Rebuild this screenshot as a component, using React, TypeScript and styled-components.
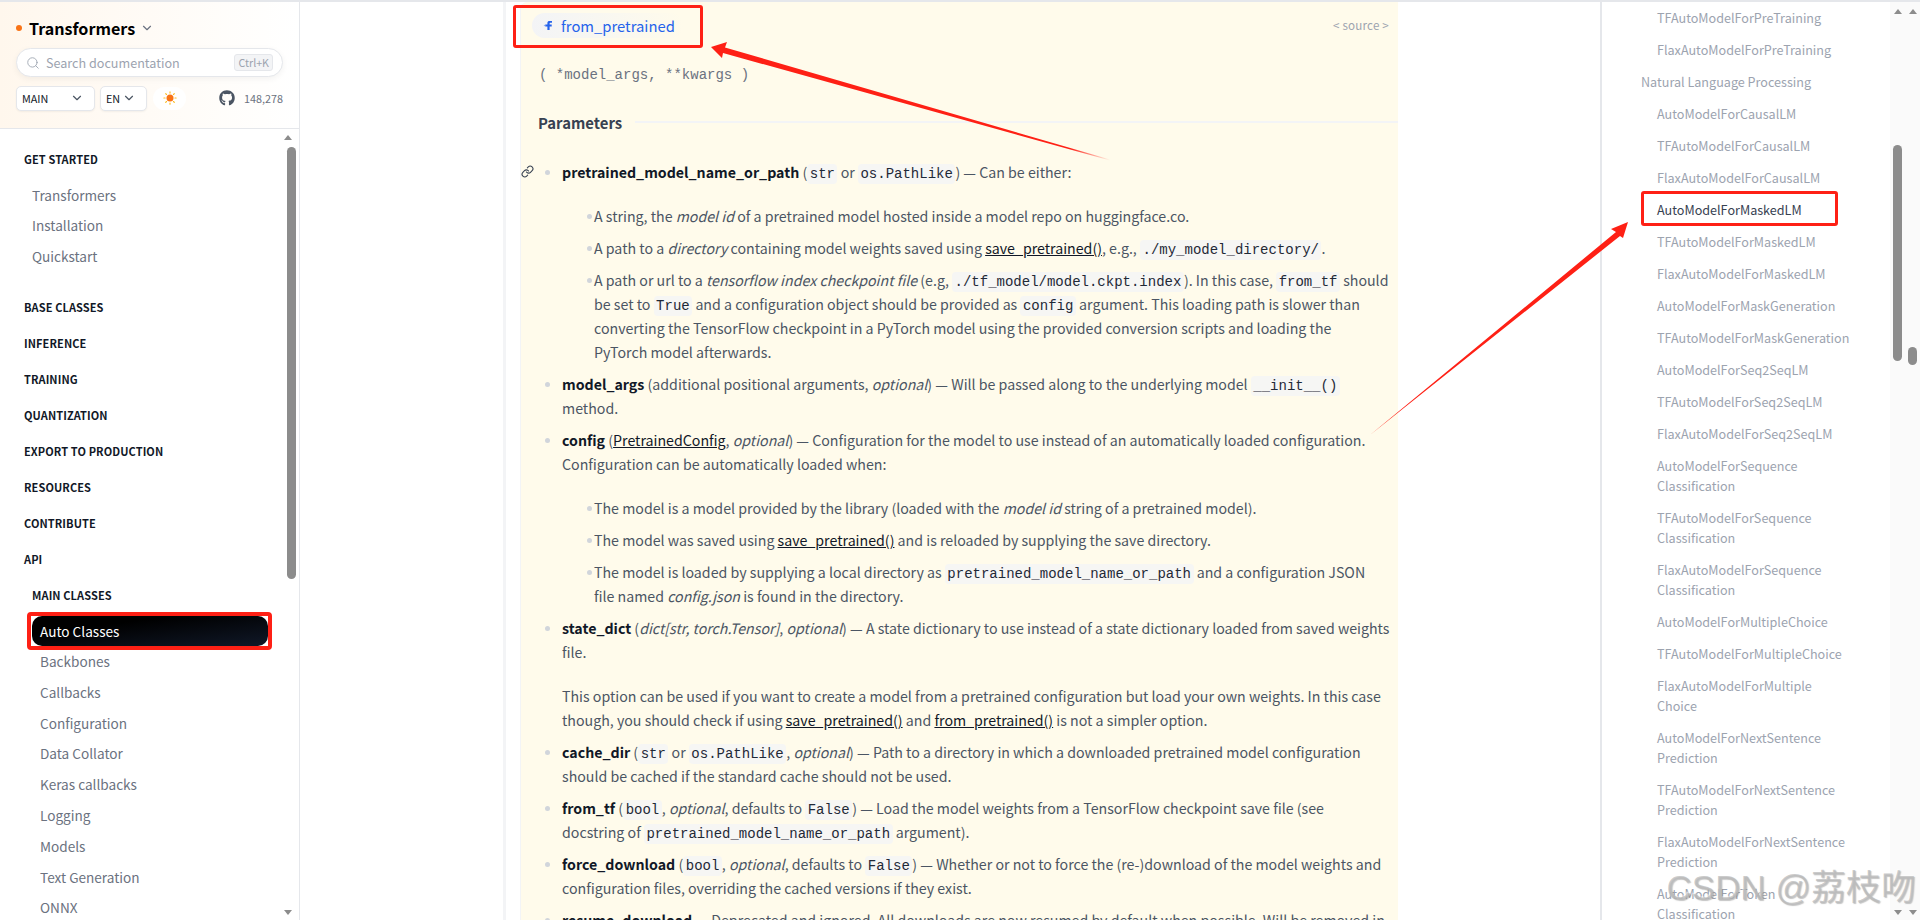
import React from 'react';
import styled, { createGlobalStyle } from 'styled-components';
import { ChevronDown, Search, Link } from 'lucide-react';
import { FaGithub } from 'react-icons/fa';

const sans = `"Noto Sans CJK SC", "Source Sans Pro", "Noto Sans", sans-serif`;
const mono = `"Liberation Mono", "DejaVu Sans Mono", monospace`;
const RED = '#fe2015';

const Global = createGlobalStyle`
  html, body { margin: 0; padding: 0; height: 920px; overflow: hidden; background: #fff; }
  body { font-family: ${sans}; }
  *, *::before, *::after { box-sizing: border-box; }
`;

const Page = styled.div`
  position: relative;
  display: grid;
  grid-template-columns: 300px 1300px 320px;
  width: 1920px;
  height: 920px;
  overflow: hidden;
  border-top: 2px solid #e5e7eb;
`;

/* left sidebar */
const LeftBar = styled.aside`
  display: flex;
  flex-direction: column;
  height: 918px;
  border-right: 1px solid #e5e7eb;
  overflow: hidden;
`;
const SideHead = styled.header`
  height: 127px;
  flex: none;
  padding: 11px 16px 0;
  background: linear-gradient(to right, #fff7ed, #fff);
  border-bottom: 1px solid #e5e7eb;
`;
const Brand = styled.div`
  display: flex;
  align-items: center;
  height: 30px;
  font-size: 16.1px;
  font-weight: 700;
  color: #000;
  svg { margin-left: 5px; color: #6b7280; }
`;
const Dot = styled.span`
  width: 6px;
  height: 6px;
  margin: 0 7px 0 0;
  border-radius: 50%;
  background: #f97316;
`;
const SearchBox = styled.div`
  display: flex;
  align-items: center;
  height: 29px;
  margin-top: 5px;
  padding: 0 9px;
  width: 267px;
  background: #fff;
  border: 1px solid #e5e7eb;
  border-radius: 15px;
  box-shadow: 0 2px 6px rgba(0, 0, 0, 0.05);
  color: #9ca3af;
  font-size: 12.6px;
  svg { margin-right: 6px; }
`;
const Kbd = styled.kbd`
  margin-left: auto;
  padding: 0 3px;
  height: 17px;
  line-height: 15px;
  font-family: ${sans};
  font-size: 10.7px;
  background: #f3f4f6;
  border: 1px solid #e5e7eb;
  border-radius: 3px;
`;
const Controls = styled.div`
  display: flex;
  align-items: center;
  margin-top: 8px;
  height: 26px;
`;
const Select = styled.div<{ $w: number }>`
  display: flex;
  align-items: center;
  justify-content: space-between;
  width: ${(p) => p.$w}px;
  height: 25px;
  margin-right: 5px;
  padding: 0 10px 0 5px;
  font-size: 10.8px;
  color: #111827;
  background: #fff;
  border: 1px solid #e5e7eb;
  border-radius: 5px;
  box-shadow: 0 1px 2px rgba(0, 0, 0, 0.05);
  svg { color: #4b5563; }
`;
const ThemeBtn = styled.button`
  display: flex;
  align-items: center;
  justify-content: center;
  width: 33px;
  height: 23px;
  margin-left: 1px;
  padding: 0;
  border: 0;
  border-radius: 12px;
  background: #fff;
`;
const Stars = styled.div`
  display: flex;
  align-items: center;
  margin-left: auto;
  font-size: 10.8px;
  color: #6b7280;
  svg { margin-right: 9px; color: #4b5563; }
`;
const NavWrap = styled.div`
  position: relative;
  flex: 1;
  overflow: hidden;
  padding: 20px 0 0 24px;
`;
const NavHeading = styled.div<{ $sub?: boolean; $mt?: number }>`
  height: 20px;
  line-height: 20px;
  margin-top: ${(p) => p.$mt ?? 16}px;
  margin-left: ${(p) => (p.$sub ? 8 : 0)}px;
  font-size: 11px;
  font-weight: 700;
  letter-spacing: 0.1px;
  color: #111827;
  text-transform: uppercase;
`;
const NavItem = styled.div<{ $deep?: boolean; $active?: boolean; $h?: number }>`
  position: relative;
  height: ${(p) => p.$h ?? 30.8}px;
  line-height: ${(p) => p.$h ?? 30.8}px;
  margin-left: 8px;
  width: 236px;
  padding-left: ${(p) => (p.$deep ? 8 : 0)}px;
  font-size: 13.6px;
  color: ${(p) => (p.$active ? '#fff' : '#6b7280')};
  ${(p) =>
    p.$active &&
    `background: linear-gradient(to bottom right, #000 30%, #101828);
     border-radius: 10px;
     &::after {
       content: '';
       position: absolute;
       left: -5px;
       right: -4px;
       top: -4px;
       bottom: -4px;
       border: 4px solid ${RED};
       border-radius: 4px;
     }`}
`;
const NavGroup = styled.div<{ $mt?: number }>`
  margin-top: ${(p) => p.$mt ?? 0}px;
`;

/* page scrollbars, drawn */
const Scrollbar = styled.div<{ $right: number; $top: number; $h: number }>`
  position: absolute;
  right: ${(p) => p.$right}px;
  top: ${(p) => p.$top}px;
  width: 9px;
  height: ${(p) => p.$h}px;
  background: #8c8c8c;
  border-radius: 5px;
`;
const ScrollArrow = styled.div<{ $right: number; $down?: boolean; $y: number }>`
  position: absolute;
  right: ${(p) => p.$right}px;
  ${(p) => (p.$down ? 'bottom' : 'top')}: ${(p) => p.$y}px;
  width: 0;
  height: 0;
  border-left: 4.5px solid transparent;
  border-right: 4.5px solid transparent;
  ${(p) => (p.$down ? 'border-top' : 'border-bottom')}: 5px solid #8c8c8c;
`;

/* main */
const Main = styled.main`
  height: 918px;
  padding-left: 203px;
  overflow: hidden;
`;
const MainInner = styled.div`
  height: 100%;
  padding-left: 14px;
  border-left: 3px solid #f3f4f6;
`;
const Panel = styled.section`
  width: 878px;
  height: 100%;
  background: #fffbeb;
  border-left: 1px solid #f3f4f6;
  border-top-left-radius: 8px;
`;
const TitleRow = styled.div`
  display: flex;
  align-items: center;
  justify-content: space-between;
  height: 46px;
  padding: 0 9px 0 11px;
`;
const Chip = styled.div`
  position: relative;
  display: flex;
  align-items: center;
  flex: none;
  width: 152px;
  height: 25px;
  padding-left: 11px;
  border-radius: 13px;
  background: linear-gradient(to right, #f3f4f6, #fffbeb);
  color: #2563eb;
  font-size: 14.8px;
  svg { flex: none; margin-right: 7px; }
  &::after {
    content: '';
    position: absolute;
    left: -19px;
    right: -19px;
    top: -8px;
    bottom: -10px;
    border: 3px solid ${RED};
    border-radius: 3px;
  }
`;
const Source = styled.div`
  font-size: 11.6px;
  color: #9ca3af;
  letter-spacing: 0.2px;
`;
const Signature = styled.div`
  padding-left: 18px;
  height: 34px;
  margin-top: 10px;
  line-height: 34px;
  font-family: ${mono};
  font-size: 14px;
  color: #6b7280;
`;
const ParamHead = styled.div`
  display: flex;
  align-items: center;
  height: 28px;
  margin-top: 16px;
  padding-left: 17px;
  font-size: 14.9px;
  font-weight: 600;
  color: #374151;
  &::after {
    content: '';
    flex: 1;
    height: 2px;
    margin-left: 13px;
    background: #f3f4f6;
  }
`;
const ParamList = styled.ul`
  list-style: none;
  margin: 24px 0 0;
  padding: 0 0 0 41px;
  font-size: 14.2px;
  line-height: 24px;
  color: #4b5563;
`;
const Param = styled.li<{ $mt?: number }>`
  position: relative;
  margin-top: ${(p) => p.$mt ?? 8}px;
  width: 832px;
  &::before {
    content: '';
    position: absolute;
    left: -17px;
    top: 10px;
    width: 5px;
    height: 5px;
    border-radius: 50%;
    background: #d1d5db;
  }
`;
const SubList = styled.ul`
  list-style: none;
  margin: 20px 0 0;
  padding: 0 0 0 32px;
`;
const SubItem = styled.li<{ $mt?: number }>`
  position: relative;
  margin-top: ${(p) => p.$mt ?? 8}px;
  &::before {
    content: '';
    position: absolute;
    left: -7px;
    top: 10px;
    width: 5px;
    height: 5px;
    border-radius: 50%;
    background: #d1d5db;
  }
`;
const Anchor = styled.span`
  position: absolute;
  left: -41px;
  top: 5px;
  color: #374151;
  display: flex;
`;
const Name = styled.strong`
  font-weight: 600;
  color: #111827;
`;
const Code = styled.code`
  padding: 2px 2.5px;
  font-family: ${mono};
  font-size: 14px;
  line-height: 1;
  color: #1f2937;
  background: #f6f6f4;
  border-radius: 4px;
`;
const DocLink = styled.a`
  color: #111827;
  text-decoration: underline;
`;
const Para = styled.p`
  margin: 20px 0 0;
`;

/* right sidebar */
const RightBar = styled.aside`
  position: relative;
  height: 918px;
  overflow: hidden;
  border-left: 2px solid #e5e7eb;
  background: linear-gradient(to right, #fff 288px, #fafafa 288px);
`;
const Toc = styled.ul`
  list-style: none;
  margin: 0;
  padding: 0 0 0 39px;
  font-size: 12.6px;
  line-height: 20px;
  color: #9ca3af;
`;
const TocItem = styled.li<{ $head?: boolean; $active?: boolean }>`
  margin-left: ${(p) => (p.$head ? 0 : 16)}px;
  padding: 6px 0;
  white-space: pre-line;
  ${(p) =>
    p.$active &&
    `position: relative;
     color: #374151;
     &::after {
       content: '';
       position: absolute;
       left: -16px;
       top: -3px;
       width: 197px;
       height: 35px;
       border: 3px solid ${RED};
       border-radius: 3px;
     }`}
`;
const Watermark = styled.div`
  position: absolute;
  right: 4px;
  bottom: 10px;
  font-family: "Liberation Sans", "Noto Sans CJK SC", sans-serif;
  font-size: 35px;
  color: rgba(185, 185, 185, 0.72);
  text-shadow: 1px 1px 1px rgba(110, 110, 110, 0.4), -1px -1px 0 rgba(255, 255, 255, 0.5);
  white-space: nowrap;
`;
const ArrowLayer = styled.svg`
  position: absolute;
  left: 0;
  top: -2px;
  pointer-events: none;
`;

const Sun = () => (
  <svg width="14" height="14" viewBox="0 0 24 24" fill="#f59e0b">
    <circle cx="12" cy="12" r="6" fill="#f97316" />
    <g stroke="#fbbf24" strokeWidth="2" strokeLinecap="round">
      <path d="M12 1.5v2M12 20.5v2M1.5 12h2M20.5 12h2M4.6 4.6 6 6M18 18l1.4 1.4M4.6 19.4 6 18M18 6l1.4-1.4" />
    </g>
  </svg>
);

const FnIcon = () => (
  <svg width="11" height="11" viewBox="0 0 12 12" fill="#2563eb">
    <path d="M6.4 1h3.4v2H8c-.5 0-.8.3-.8.8V5h2.3v2H7.2v4H4.8V7H2.6V5h2.2V3.5C4.8 2 5.4 1 6.4 1z" />
    <path d="M2.6 5 .6 6l2 1z" opacity=".5" />
  </svg>
);

const tocRows: { t: string; head?: boolean; active?: boolean }[] = [
  { t: 'TFAutoModelForPreTraining' },
  { t: 'FlaxAutoModelForPreTraining' },
  { t: 'Natural Language Processing', head: true },
  { t: 'AutoModelForCausalLM' },
  { t: 'TFAutoModelForCausalLM' },
  { t: 'FlaxAutoModelForCausalLM' },
  { t: 'AutoModelForMaskedLM', active: true },
  { t: 'TFAutoModelForMaskedLM' },
  { t: 'FlaxAutoModelForMaskedLM' },
  { t: 'AutoModelForMaskGeneration' },
  { t: 'TFAutoModelForMaskGeneration' },
  { t: 'AutoModelForSeq2SeqLM' },
  { t: 'TFAutoModelForSeq2SeqLM' },
  { t: 'FlaxAutoModelForSeq2SeqLM' },
  { t: 'AutoModelForSequence\nClassification' },
  { t: 'TFAutoModelForSequence\nClassification' },
  { t: 'FlaxAutoModelForSequence\nClassification' },
  { t: 'AutoModelForMultipleChoice' },
  { t: 'TFAutoModelForMultipleChoice' },
  { t: 'FlaxAutoModelForMultiple\nChoice' },
  { t: 'AutoModelForNextSentence\nPrediction' },
  { t: 'TFAutoModelForNextSentence\nPrediction' },
  { t: 'FlaxAutoModelForNextSentence\nPrediction' },
  { t: 'AutoModelForToken\nClassification' },
];

const topics = ['Base classes', 'Inference', 'Training', 'Quantization', 'Export to production', 'Resources', 'Contribute', 'API'];
const mainClasses = ['Backbones', 'Callbacks', 'Configuration', 'Data Collator', 'Keras callbacks', 'Logging', 'Models', 'Text Generation', 'ONNX'];

export default function App() {
  return (
    <>
      <Global />
      <Page>
        <LeftBar>
          <SideHead>
            <Brand>
              <Dot />
              Transformers
              <ChevronDown size={14} />
            </Brand>
            <SearchBox>
              <Search size={14} strokeWidth={1.5} />
              Search documentation
              <Kbd>Ctrl+K</Kbd>
            </SearchBox>
            <Controls>
              <Select $w={79}>
                MAIN <ChevronDown size={14} />
              </Select>
              <Select $w={47}>
                EN <ChevronDown size={14} />
              </Select>
              <ThemeBtn>
                <Sun />
              </ThemeBtn>
              <Stars>
                <FaGithub size={16} />
                148,278
              </Stars>
            </Controls>
          </SideHead>
          <NavWrap>
            <NavHeading $mt={0}>Get started</NavHeading>
            <NavGroup $mt={11}>
              <NavItem $h={30.4}>Transformers</NavItem>
              <NavItem $h={30.4}>Installation</NavItem>
              <NavItem $h={30.4}>Quickstart</NavItem>
            </NavGroup>
            {topics.map((t, i) => (
              <NavHeading key={t} $mt={i === 0 ? 25.8 : 16}>
                {t}
              </NavHeading>
            ))}
            <NavHeading $sub>Main classes</NavHeading>
            <NavGroup $mt={11}>
              <NavItem $deep $active $h={30}>
                Auto Classes
              </NavItem>
              {mainClasses.map((t) => (
                <NavItem $deep key={t}>
                  {t}
                </NavItem>
              ))}
            </NavGroup>
            <ScrollArrow $right={7} $y={6} />
            <Scrollbar $right={3} $top={18} $h={432} />
            <ScrollArrow $right={7} $y={5} $down />
          </NavWrap>
        </LeftBar>

        <Main>
          <MainInner>
            <Panel>
              <TitleRow>
                <Chip>
                  <FnIcon />
                  from_pretrained
                </Chip>
                <Source>&lt; source &gt;</Source>
              </TitleRow>
              <Signature>( *model_args, **kwargs )</Signature>
              <ParamHead>Parameters</ParamHead>
              <ParamList>
                <Param $mt={0}>
                  <Anchor>
                    <Link size={13} />
                  </Anchor>
                  <Name>pretrained_model_name_or_path</Name> (<Code>str</Code> or <Code>os.PathLike</Code>) — Can be
                  either:
                  <SubList>
                    <SubItem $mt={0}>
                      A string, the <em>model id</em> of a pretrained model hosted inside a model repo on huggingface.co.
                    </SubItem>
                    <SubItem>
                      A path to a <em>directory</em> containing model weights saved using{' '}
                      <DocLink>save_pretrained()</DocLink>, e.g., <Code>./my_model_directory/</Code>.
                    </SubItem>
                    <SubItem>
                      A path or url to a <em>tensorflow index checkpoint file</em> (e.g,{' '}
                      <Code>./tf_model/model.ckpt.index</Code>). In this case, <Code>from_tf</Code> should
                      <br />
                      be set to <Code>True</Code> and a configuration object should be provided as <Code>config</Code>{' '}
                      argument. This loading path is slower than
                      <br />
                      converting the TensorFlow checkpoint in a PyTorch model using the provided conversion scripts and
                      loading the
                      <br />
                      PyTorch model afterwards.
                    </SubItem>
                  </SubList>
                </Param>
                <Param>
                  <Name>model_args</Name> (additional positional arguments, <em>optional</em>) — Will be passed along to
                  the underlying model <Code>__init__()</Code>
                  <br />
                  method.
                </Param>
                <Param>
                  <Name>config</Name> (<DocLink>PretrainedConfig</DocLink>, <em>optional</em>) — Configuration for the
                  model to use instead of an automatically loaded configuration.
                  <br />
                  Configuration can be automatically loaded when:
                  <SubList>
                    <SubItem $mt={0}>
                      The model is a model provided by the library (loaded with the <em>model id</em> string of a
                      pretrained model).
                    </SubItem>
                    <SubItem>
                      The model was saved using <DocLink>save_pretrained()</DocLink> and is reloaded by supplying the
                      save directory.
                    </SubItem>
                    <SubItem>
                      The model is loaded by supplying a local directory as <Code>pretrained_model_name_or_path</Code>{' '}
                      and a configuration JSON
                      <br />
                      file named <em>config.json</em> is found in the directory.
                    </SubItem>
                  </SubList>
                </Param>
                <Param>
                  <Name>state_dict</Name> (<em>dict[str, torch.Tensor]</em>, <em>optional</em>) — A state dictionary to
                  use instead of a state dictionary loaded from saved weights
                  <br />
                  file.
                  <Para>
                    This option can be used if you want to create a model from a pretrained configuration but load your
                    own weights. In this case
                    <br />
                    though, you should check if using <DocLink>save_pretrained()</DocLink> and{' '}
                    <DocLink>from_pretrained()</DocLink> is not a simpler option.
                  </Para>
                </Param>
                <Param>
                  <Name>cache_dir</Name> (<Code>str</Code> or <Code>os.PathLike</Code>, <em>optional</em>) — Path to a
                  directory in which a downloaded pretrained model configuration
                  <br />
                  should be cached if the standard cache should not be used.
                </Param>
                <Param>
                  <Name>from_tf</Name> (<Code>bool</Code>, <em>optional</em>, defaults to <Code>False</Code>) — Load the
                  model weights from a TensorFlow checkpoint save file (see
                  <br />
                  docstring of <Code>pretrained_model_name_or_path</Code> argument).
                </Param>
                <Param>
                  <Name>force_download</Name> (<Code>bool</Code>, <em>optional</em>, defaults to <Code>False</Code>) —
                  Whether or not to force the (re-)download of the model weights and
                  <br />
                  configuration files, overriding the cached versions if they exist.
                </Param>
                <Param>
                  <Name>resume_download</Name> — Deprecated and ignored. All downloads are now resumed by default when
                  possible. Will be removed in
                </Param>
              </ParamList>
            </Panel>
          </MainInner>
        </Main>

        <RightBar>
          <Toc>
            {tocRows.map((r) => (
              <TocItem key={r.t} $head={r.head} $active={r.active}>
                {r.t}
              </TocItem>
            ))}
          </Toc>
          <ScrollArrow $right={18} $y={7} />
          <ScrollArrow $right={3} $y={7} />
          <Scrollbar $right={18} $top={143} $h={216} />
          <Scrollbar $right={3} $top={345} $h={18} />
          <ScrollArrow $right={18} $y={5} $down />
          <ScrollArrow $right={3} $y={5} $down />
          <Watermark>CSDN @荔枝吻</Watermark>
        </RightBar>

        <ArrowLayer width="1920" height="920" viewBox="0 0 1920 920">
          <defs>
            <linearGradient id="fadeA" x1="1110" y1="160" x2="711" y2="47" gradientUnits="userSpaceOnUse">
              <stop offset="0" stopColor={RED} stopOpacity="0" />
              <stop offset="0.1" stopColor={RED} />
              <stop offset="1" stopColor={RED} />
            </linearGradient>
          </defs>
          <polygon points="711,47 727,42 725,47.5 1110,159.6 1110,160.6 723,53 722,58" fill="url(#fadeA)" />
          <polygon points="1628,222 1611,229 1616,232 1370,435 1620,236 1623,238" fill={RED} />
        </ArrowLayer>
      </Page>
    </>
  );
}
